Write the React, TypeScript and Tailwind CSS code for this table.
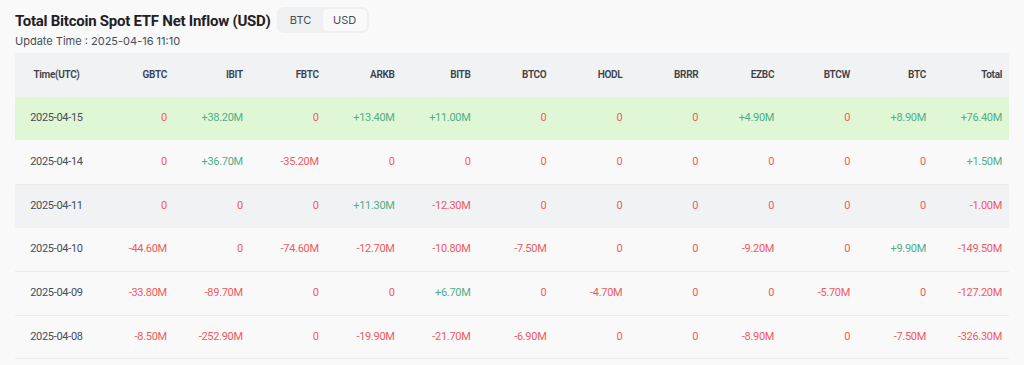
import { useState } from 'react';

const columns = ['GBTC', 'IBIT', 'FBTC', 'ARKB', 'BITB', 'BTCO', 'HODL', 'BRRR', 'EZBC', 'BTCW', 'BTC', 'Total'];

// values in millions USD, same order as columns
const rows: { date: string; values: number[] }[] = [
  { date: '2025-04-15', values: [0, 38.2, 0, 13.4, 11.0, 0, 0, 0, 4.9, 0, 8.9, 76.4] },
  { date: '2025-04-14', values: [0, 36.7, -35.2, 0, 0, 0, 0, 0, 0, 0, 0, 1.5] },
  { date: '2025-04-11', values: [0, 0, 0, 11.3, -12.3, 0, 0, 0, 0, 0, 0, -1.0] },
  { date: '2025-04-10', values: [-44.6, 0, -74.6, -12.7, -10.8, -7.5, 0, 0, -9.2, 0, 9.9, -149.5] },
  { date: '2025-04-09', values: [-33.8, -89.7, 0, 0, 6.7, 0, -4.7, 0, 0, -5.7, 0, -127.2] },
  { date: '2025-04-08', values: [-8.5, -252.9, 0, -19.9, -21.7, -6.9, 0, 0, -8.9, 0, -7.5, -326.3] },
];

const formatValue = (v: number): string => {
  if (v === 0) return '0';
  return `${v > 0 ? '+' : '-'}${Math.abs(v).toFixed(2)}M`;
};

const rowBg = (i: number): string => {
  if (i === 0) return 'bg-[#e0f7d6]';
  if (i === 2) return 'bg-[#f1f2f4]';
  return 'border-b border-[#ececec]';
};

export default function App() {
  const [unit, setUnit] = useState<'BTC' | 'USD'>('USD');

  return (
    <div className="w-[1024px] h-[365px] overflow-hidden bg-[#f9f9f9] text-[#1e2026] font-['Inter','Liberation_Sans',sans-serif]">
      <div className="pl-[15px] pr-[15px] pt-[7px]">
        {/* Header */}
        <div className="flex items-center gap-[6px]">
          <h1 className="text-[15px] font-bold tracking-[-0.25px] leading-[28px] font-['Roboto','Liberation_Sans',sans-serif]">
            Total Bitcoin Spot ETF Net Inflow (USD)
          </h1>
          <div className="-mt-[2px] flex h-[26px] items-center rounded-[7px] bg-[#eff0f2] p-[2px] text-[11px] text-[#474d57]">
            {(['BTC', 'USD'] as const).map((u) => (
              <button
                key={u}
                onClick={() => setUnit(u)}
                className={`h-[22px] w-[44px] rounded-[5px] ${unit === u ? 'bg-[#f9f9f9]' : ''}`}
              >
                {u}
              </button>
            ))}
          </div>
        </div>
        <div className="-mt-[1px] text-[11px] leading-[14px] text-[#474d57]">Update Time : 2025-04-16 11:10</div>

        {/* Table */}
        <table className="mt-[5px] w-[994px] table-fixed border-collapse text-[11px] tracking-[-0.3px] font-['Roboto','Liberation_Sans',sans-serif]">
          <colgroup>
            <col className="w-[83px]" />
            {columns.map((c) => (
              <col key={c} />
            ))}
          </colgroup>
          <thead>
            <tr className="h-[43.7px] bg-[#f1f2f4] text-[#3c4048]">
              <th className="text-center text-[10px] font-semibold">Time(UTC)</th>
              {columns.map((c) => (
                <th key={c} className="pr-[7px] text-right text-[10px] font-semibold">
                  {c}
                </th>
              ))}
            </tr>
          </thead>
          <tbody>
            {rows.map((row, i) => (
              <tr key={row.date} className={`h-[43.7px] ${rowBg(i)}`}>
                <td className="text-center text-[#474d57]">{row.date}</td>
                {row.values.map((v, j) => (
                  <td
                    key={j}
                    className={`pr-[7px] text-right ${v > 0 ? 'text-[#4fae88]' : 'text-[#ef5a5f]'}`}
                  >
                    {formatValue(v)}
                  </td>
                ))}
              </tr>
            ))}
          </tbody>
        </table>
      </div>
    </div>
  );
}
